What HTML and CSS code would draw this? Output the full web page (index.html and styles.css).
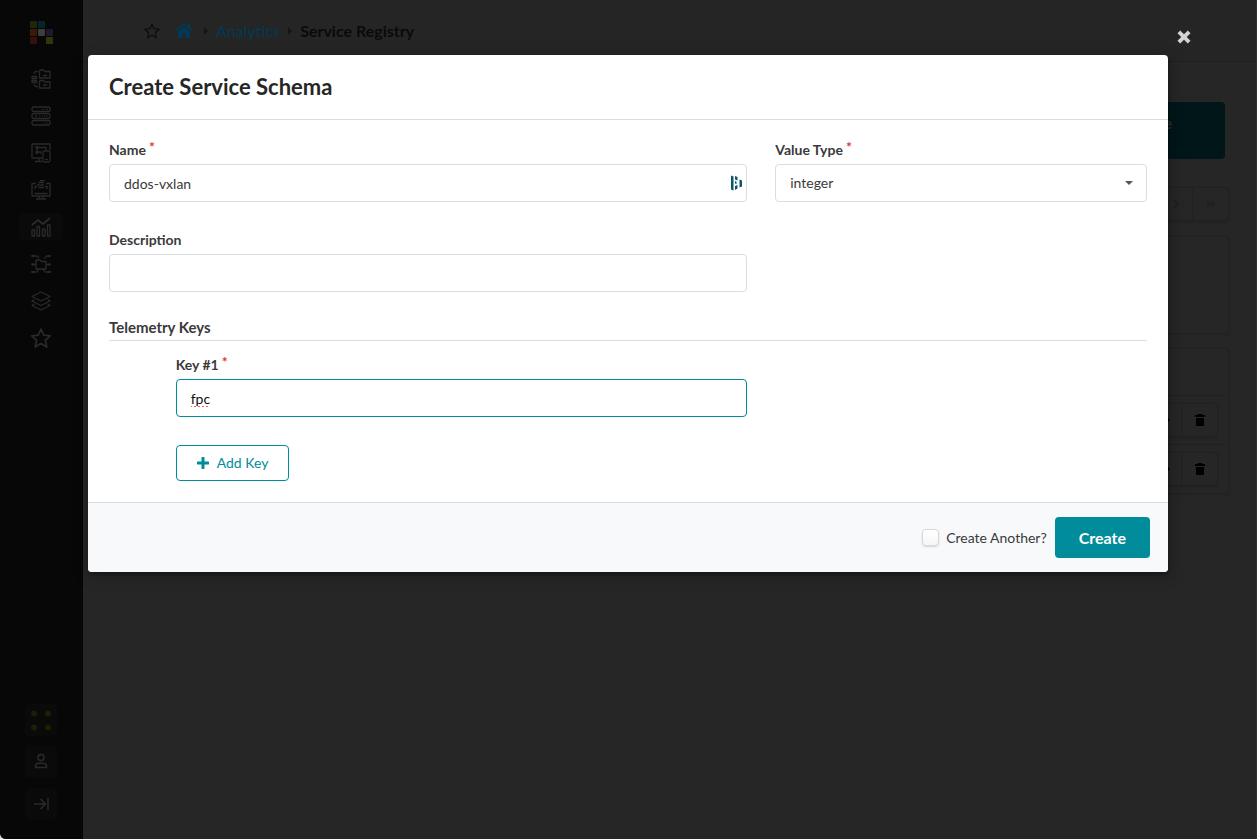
FILE: index.html
```html
<!DOCTYPE html>
<html lang="en">
<head>
<meta charset="utf-8">
<title>Service Registry</title>
<link rel="stylesheet" href="styles.css">
</head>
<body>
<div class="app">
  <nav class="sidebar" aria-label="Main">
    <svg class="logo" viewBox="0 0 23 23" aria-hidden="true">
      <rect x="0" y="0" width="7" height="7" rx="1" fill="#1e270b"/><rect x="8" y="0" width="7" height="7" rx="1" fill="#04262a"/>
      <rect x="0" y="8" width="7" height="7" rx="1" fill="#3c1a05"/><rect x="8" y="8" width="7" height="7" rx="1" fill="#3d3d3d"/><rect x="16" y="8" width="7" height="7" rx="1" fill="#1d1830"/>
      <rect x="0" y="16" width="7" height="7" rx="1" fill="#36100c"/><rect x="16" y="16" width="7" height="7" rx="1" fill="#33360a"/>
    </svg>
    <div class="nav-list">
      <a class="nav-item" href="#" aria-label="Blueprints"><svg class="nav-icon" viewBox="0 0 20 20"><path d="M9.500 1h3l1.500 1.500h5V9H8.500V2zM9.500 11.500h3L14 13h5v6H8.500v-6.500zM12 6.500h4M12 16h4M1 7.500h4.500v2H1zM1 11.500h4.500v2H1zM3 5V4l1.500-1.500H7M3 15.500l1.500 2H7"/></svg></a>
      <a class="nav-item" href="#" aria-label="Devices"><svg class="nav-icon" viewBox="0 0 20 20"><rect x="1" y="1" width="18" height="4.500" rx="1.500"/><rect x="1" y="7.500" width="18" height="5" rx="1.500"/><rect x="1" y="14.500" width="18" height="4.500" rx="1.500"/><path d="M11 3.300h1M13.500 3.300h1M16 3.300h1M4 10h2M8 10h1M10.500 10h1M13 10h1M15.500 10h1M13 16.800h1M15.500 16.800h1"/></svg></a>
      <a class="nav-item" href="#" aria-label="Design"><svg class="nav-icon" viewBox="0 0 20 20"><path d="M11 15H1V1h18v6M4 18.500h7M8 15v3.500M7 4.500h8V7M6 5.500V9h4v2"/><circle cx="6" cy="4.500" r="1"/><circle cx="6" cy="9.500" r="1"/><rect x="12" y="8" width="7" height="11" rx="1.500"/><path d="M14 16.500h3"/></svg></a>
      <a class="nav-item" href="#" aria-label="Resources"><svg class="nav-icon" viewBox="0 0 20 20"><path d="M5 3.500H1V16h18V3.500h-4M3.500 13.500h13M5 19h10M8 16v3M12 16v3M4 9V6.500h2M16 9V6.500h-2"/><path d="M7 2.500h6M6 5h7M7 7.500h6M9 .500h5"/></svg></a>
      <a class="nav-item nav-item-active" href="#" aria-label="Analytics" aria-current="page"><svg class="nav-icon" viewBox="0 0 20 20"><path d="M1 8l6-5 5 4 7-6" stroke-width="2"/><path d="M1 13h2.500v6H1zM6 9.500h2.500V19H6zM11.500 12H14v7h-2.500zM16.500 8H19v11h-2.500z"/></svg></a>
      <a class="nav-item" href="#" aria-label="External Systems"><svg class="nav-icon" viewBox="0 0 20 20"><path d="M5 6h4l1.500 1.500H15V15H5zM2 2h4l2 2M18 2h-2l-3 2.500M1 10.500h4M15 10.500h4M1 18h5l2-3M19 18h-5l-2-3"/><circle cx="1.500" cy="2" r=".7"/><circle cx="18.500" cy="2" r=".7"/><circle cx="1.500" cy="10.500" r=".7"/><circle cx="18.500" cy="10.500" r=".7"/><circle cx="1.500" cy="18" r=".7"/><circle cx="18.500" cy="18" r=".7"/></svg></a>
      <a class="nav-item" href="#" aria-label="Platform"><svg class="nav-icon" viewBox="0 0 20 20"><path d="M10 1l9 4.500-9 4.500-9-4.500zM3.500 8.500L1 10l9 4.500 9-4.500-2.500-1.500M3.500 13L1 14.500 10 19l9-4.500-2.500-1.500"/></svg></a>
      <a class="nav-item" href="#" aria-label="Favorites"><svg class="nav-icon" viewBox="0 0 20 20"><path d="M10 1l2.700 6.200 6.600.6-5 4.500 1.500 6.700L10 15.500 4.200 19l1.500-6.700-5-4.500 6.600-.6z" stroke-width="1.700"/></svg></a>
    </div>
    <div class="nav-tools">
      <button class="tool" type="button" aria-label="Status"><svg class="tool-icon" viewBox="0 0 32 32"><g fill="#182005"><circle cx="9" cy="9.500" r="3"/><circle cx="23" cy="9.500" r="3"/><circle cx="9" cy="23.500" r="3"/><circle cx="23" cy="23.500" r="3"/></g></svg></button>
      <button class="tool" type="button" aria-label="User"><svg class="tool-icon tool-line" viewBox="0 0 32 32"><circle cx="16" cy="11.500" r="3"/><path d="M10.500 21.500v-1.500c0-2 2-3 5.500-3s5.500 1 5.500 3v1.500z"/></svg></button>
      <button class="tool" type="button" aria-label="Expand"><svg class="tool-icon tool-line" viewBox="0 0 32 32"><path d="M9 16h11M15.500 11l5 5-5 5M23 10v12"/></svg></button>
    </div>
  </nav>
  <div class="page">
    <header class="topbar">
      <svg class="crumb-star" viewBox="0 0 16 16" aria-hidden="true"><path d="M8 1.200l2.100 4.500 4.900.6-3.600 3.400.9 4.900L8 12.200l-4.300 2.400.9-4.900L1 6.300l4.900-.6z"/></svg>
      <a class="crumb-home" href="#" aria-label="Home"><svg viewBox="0 0 18 16"><path d="M9 3.800l6 5V14a1 1 0 0 1-1 1h-3.500v-4.500h-3V15H4a1 1 0 0 1-1-1V8.800z"/><path d="M8.200.8a1.300 1.300 0 0 1 1.600 0L12.500 3V1H15v4l2.800 2.400-.9 1.100L9 2.200 1.100 8.500.2 7.400z"/></svg></a>
      <svg class="crumb-sep" viewBox="0 0 4 8" aria-hidden="true"><path d="M0 0l4 4-4 4z"/></svg>
      <a class="crumb-link" href="#">Analytics</a>
      <svg class="crumb-sep" viewBox="0 0 4 8" aria-hidden="true"><path d="M0 0l4 4-4 4z"/></svg>
      <span class="crumb-current">Service Registry</span>
    </header>
    <main class="content">
      <div class="actions"><button class="page-create" type="button">Create</button></div>
      <div class="pager">
        <button class="cell" type="button" aria-label="Next page"><svg class="cell-icon chevrons" viewBox="0 0 12 12"><path d="M5 2l4 4-4 4"/></svg></button>
        <button class="cell" type="button" aria-label="Last page"><svg class="cell-icon chevrons" viewBox="0 0 12 12"><path d="M2 3l3 3-3 3M6 3l3 3-3 3"/></svg></button>
      </div>
      <section class="card query"></section>
      <section class="card">
        <div class="list-head"></div>
        <div class="list-row"><div class="group">
          <button class="cell" type="button" aria-label="Edit"><svg class="cell-icon" viewBox="0 0 12 12"><path d="M0 5h8V2l4 4-4 4V7H0z"/></svg></button>
          <button class="cell" type="button" aria-label="Delete"><svg class="cell-icon" viewBox="0 0 12 12"><path d="M4 0h4l.5 1H11v2H1V1h2.500zM2 4h8v7a1 1 0 0 1-1 1H3a1 1 0 0 1-1-1z"/></svg></button>
        </div></div>
        <div class="list-row"><div class="group">
          <button class="cell" type="button" aria-label="Edit"><svg class="cell-icon" viewBox="0 0 12 12"><path d="M0 5h8V2l4 4-4 4V7H0z"/></svg></button>
          <button class="cell" type="button" aria-label="Delete"><svg class="cell-icon" viewBox="0 0 12 12"><path d="M4 0h4l.5 1H11v2H1V1h2.500zM2 4h8v7a1 1 0 0 1-1 1H3a1 1 0 0 1-1-1z"/></svg></button>
        </div></div>
      </section>
    </main>
  </div>
</div>

<div class="overlay">
  <button class="close" type="button" aria-label="Close"><svg viewBox="0 0 14 14"><path d="M3 3l8 8M11 3l-8 8"/></svg></button>
  <form class="modal" role="dialog" aria-labelledby="title">
    <header class="modal-head"><h1 class="title" id="title">Create Service Schema</h1></header>
    <div class="modal-body">
      <div class="row">
        <div class="field">
          <label class="label" for="name">Name <span class="required">*</span></label>
          <div class="control">
            <input class="input" id="name" type="text" value="ddos-vxlan" spellcheck="false">
            <svg class="autofill" viewBox="0 0 12 16" aria-hidden="true"><path d="M0 .5l2.500 1v14L0 14.500zM4 1l2.500 1v3.500L4 4.500zM4 11l2.500-1v3.500L4 15zM4 6l1.500.7V9L4 8.500zM8.500 4.500L11 5.500v6l-2.500 1z"/></svg>
          </div>
        </div>
        <div class="field">
          <label class="label" for="type">Value Type <span class="required">*</span></label>
          <div class="control">
            <select class="input select" id="type"><option>integer</option></select>
            <svg class="caret" viewBox="0 0 8 4" aria-hidden="true"><path d="M0 0h8L4 4z"/></svg>
          </div>
        </div>
      </div>
      <div class="row">
        <div class="field">
          <label class="label" for="description">Description</label>
          <input class="input" id="description" type="text">
        </div>
      </div>
      <h2 class="section">Telemetry Keys</h2>
      <div class="row row-keys">
        <div class="field field-key">
          <label class="label" for="key">Key #1 <span class="required">*</span></label>
          <input class="input input-active" id="key" type="text" value="fpc" spellcheck="false">
        </div>
        <div class="field field-key">
          <button class="add" type="button"><svg class="plus" viewBox="0 0 12 12" aria-hidden="true"><path d="M6 1v10M1 6h10"/></svg>Add Key</button>
        </div>
      </div>
    </div>
    <footer class="modal-foot">
      <label class="another"><input class="check" type="checkbox">Create Another?</label>
      <button class="submit" type="button">Create</button>
    </footer>
  </form>
</div>
</body>
</html>
```

FILE: styles.css
```css
* { box-sizing: border-box; }
html { background: #d8d8d8; }
body { margin: 0; font: 14px/20px Lato, "Liberation Sans", sans-serif; color: #3a3a3a; }
button, input, select { font: inherit; color: inherit; margin: 0; }
button { cursor: pointer; }
svg { display: block; flex: none; }

.app { display: flex; min-height: 100vh; background: #262626; border-bottom-left-radius: 6px; overflow: hidden; border-right: 1px solid #303030; }
.sidebar { display: flex; flex-direction: column; align-items: center; flex: none; width: 83px; padding: 21px 1px 19px 0; background: #070707; }
.logo { width: 23px; height: 23px; }
.nav-list { display: flex; flex-direction: column; gap: 10px; margin-top: 21px; }
.nav-item { display: flex; align-items: center; justify-content: center; width: 44px; height: 27px; border-radius: 4px; }
.nav-item-active { background: #0a0a0a; }
.nav-icon { width: 20px; height: 20px; fill: none; stroke: #2a2a2a; stroke-width: 1.3; stroke-linejoin: round; }
.nav-tools { display: flex; flex-direction: column; gap: 10px; margin-top: auto; }
.tool { width: 32px; height: 32px; padding: 0; border: 0; border-radius: 4px; background: #0a0a0a; }
.tool-icon { width: 32px; height: 32px; }
.tool-line { fill: none; stroke: #2a2a2a; stroke-width: 1.5; }

.page { flex: 1; min-width: 0; }
.topbar { display: flex; align-items: center; height: 62px; padding-left: 61px; border-bottom: 1px solid #202020; background: #252525; font-size: 16px; }
.crumb-star { width: 16px; height: 16px; fill: none; stroke: #0d0d0d; stroke-width: 1.2; }
.crumb-home { margin: 0 11px 0 15px; fill: #003a56; }
.crumb-home svg { width: 18px; height: 16px; }
.crumb-sep { width: 4px; height: 8px; fill: #151515; }
.crumb-link { margin: 0 8px 0 8px; color: #003a56; text-decoration: none; }
.crumb-current { margin-left: 8px; color: #0a0a0a; font-weight: 700; }

.content { padding: 40px 27px 0 28px; }
.actions { display: flex; justify-content: flex-end; padding-right: 4px; }
.page-create { height: 57px; padding: 0 53px 16px; border: 0; border-radius: 4px; background: #001619; color: #303030; font-size: 16px; font-weight: 700; }
.pager, .group { display: flex; width: max-content; margin-left: auto; border: 1px solid #212121; border-radius: 4px; box-shadow: 0 1px 2px #202020; }
.pager { margin-top: 28px; }
.cell { display: flex; align-items: center; justify-content: center; width: 36px; height: 32px; padding: 0; border: 0; border-left: 1px solid #212121; background: none; }
.cell:first-child { justify-content: flex-end; padding-right: 11px; border-left: 0; }
.cell-icon { width: 12px; height: 12px; fill: #000; }
.chevrons { fill: none; stroke: #202020; stroke-width: 2; }
.card { margin-top: 14px; border: 1px solid #212121; border-radius: 4px; box-shadow: 0 1px 2px #222; }
.query { margin-top: 15px; height: 98px; }
.list-head { height: 46px; }
.list-row { padding: 7px 10px; border-top: 1px solid #212121; }

.overlay { position: absolute; inset: 0; padding: 55px 89px 0 88px; }
.close { position: absolute; top: 28px; right: 64px; width: 18px; height: 18px; padding: 0; border: 0; background: none; }
.close svg { width: 18px; height: 18px; fill: none; stroke: #d3d3d3; stroke-width: 3; }
.modal { border-radius: 4px; background: #fff; box-shadow: 1px 3px 3px rgba(0, 0, 0, .2), 1px 3px 15px 2px rgba(0, 0, 0, .2); overflow: hidden; }
.modal-head { padding: 18px 21px; border-bottom: 1px solid #d9dde0; }
.title { margin: 0; color: #262626; font-size: 22px; line-height: 28px; font-weight: 700; }
.modal-body { padding: 20px 21px 21px; }
.row { display: grid; grid-template-columns: 10fr 6fr; margin: 0 -14px; }
.row + .row { margin-top: 28px; }
.row-keys { grid-template-columns: 1fr 9fr 6fr; row-gap: 28px; margin-top: 14px; }
.field { min-width: 0; padding: 0 14px; }
.field-key { grid-column: 2; }
.label { display: flex; gap: 3px; margin-bottom: 4px; font-weight: 700; }
.required { color: #e0362c; line-height: 14px; }
.control { position: relative; }
.input { display: block; width: 100%; height: 38px; padding: 0 14px; border: 1px solid #d8dde3; border-radius: 4px; outline: 0; background: #fff; }
.select { appearance: none; }
.input-active { border-color: #008c9a; color: #111; text-decoration: underline dotted #ff5b55 2px; text-underline-offset: 3px; }
.autofill { position: absolute; top: 11px; right: 4px; width: 12px; height: 16px; fill: #0e5568; }
.caret { position: absolute; top: 17px; right: 14px; width: 8px; height: 4px; fill: #555; }
.section { margin: 25px 0 0; padding-bottom: 3px; border-bottom: 1px solid #d8dde3; font-size: 15px; line-height: 20px; font-weight: 700; }
.add { display: flex; align-items: center; gap: 8px; height: 36px; padding: 0 20px; border: 1px solid #008c9a; border-radius: 4px; background: #fff; color: #008c9a; }
.plus { width: 12px; height: 12px; fill: none; stroke: #008c9a; stroke-width: 3; stroke-linecap: round; }
.modal-foot { display: flex; align-items: center; justify-content: flex-end; gap: 8px; padding: 14px 18px 14px 21px; border-top: 1px solid #d8dde3; background: #f8f9fb; }
.another { display: flex; align-items: center; gap: 7px; }
.check { appearance: none; width: 17px; height: 17px; border: 1px solid #d8d8d8; border-radius: 4px; background: linear-gradient(#fff, #f6f6f6); box-shadow: 0 1px 2px rgba(0, 0, 0, .15); }
.submit { height: 41px; padding: 0 24px; border: 0; border-radius: 4px; background: #008c9a; color: #fff; font-size: 16px; font-weight: 700; }
```
